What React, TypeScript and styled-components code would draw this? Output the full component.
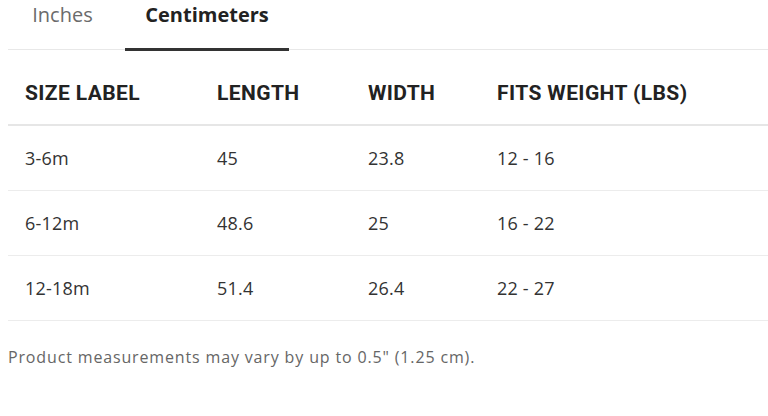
import styled, { createGlobalStyle } from 'styled-components'

const GlobalStyle = createGlobalStyle`
  body {
    margin: 0;
    background: #fff;
    font-family: 'Open Sans', 'Liberation Sans', sans-serif;
    overflow: hidden;
  }
`

const Page = styled.div`
  padding-left: 8px;
  width: 760px;
`

const TabList = styled.div`
  display: flex;
  align-items: stretch;
  gap: 8px;
  height: 50px;
  border-bottom: 1px solid #e8e8e8;
  box-sizing: border-box;
`

const Tab = styled.div<{ $active?: boolean; $width: number }>`
  display: flex;
  align-items: center;
  justify-content: center;
  width: ${(p) => p.$width}px;
  padding-bottom: 19px;
  box-sizing: border-box;
  font-size: 20px;
  font-weight: ${(p) => (p.$active ? 700 : 400)};
  color: ${(p) => (p.$active ? '#222' : '#6b6b6b')};
  border-bottom: 3px solid ${(p) => (p.$active ? '#333' : 'transparent')};
  margin-bottom: -2px;
`

const Table = styled.table`
  width: 760px;
  border-collapse: collapse;
  table-layout: fixed;
`

const HeadCell = styled.th<{ $width?: number }>`
  width: ${(p) => (p.$width ? `${p.$width}px` : 'auto')};
  height: 75px;
  padding: 12px 0 0 17px;
  text-align: left;
  font-family: 'Roboto', 'Liberation Sans', sans-serif;
  font-size: 21px;
  font-weight: 700;
  letter-spacing: 0.4px;
  color: #222;
  border-bottom: 2px solid #e6e6e6;
  box-sizing: border-box;
`

const Cell = styled.td`
  height: 65px;
  padding: 0 0 0 17px;
  font-size: 18px;
  letter-spacing: 0.2px;
  color: #333;
  border-bottom: 1px solid #ececec;
  box-sizing: border-box;
`

const Note = styled.p`
  margin: 26px 0 0;
  font-size: 16px;
  letter-spacing: 0.85px;
  line-height: 20px;
  color: #666;
`

const rows = [
  ['3-6m', '45', '23.8', '12 - 16'],
  ['6-12m', '48.6', '25', '16 - 22'],
  ['12-18m', '51.4', '26.4', '22 - 27'],
]

export default function App() {
  return (
    <Page>
      <GlobalStyle />
      <TabList>
        <Tab $width={109}>Inches</Tab>
        <Tab $width={164} $active>
          Centimeters
        </Tab>
      </TabList>
      <Table>
        <thead>
          <tr>
            <HeadCell $width={192}>SIZE LABEL</HeadCell>
            <HeadCell $width={151}>LENGTH</HeadCell>
            <HeadCell $width={129}>WIDTH</HeadCell>
            <HeadCell>FITS WEIGHT (LBS)</HeadCell>
          </tr>
        </thead>
        <tbody>
          {rows.map((r) => (
            <tr key={r[0]}>
              {r.map((c, i) => (
                <Cell key={i}>{c}</Cell>
              ))}
            </tr>
          ))}
        </tbody>
      </Table>
      <Note>Product measurements may vary by up to 0.5" (1.25 cm).</Note>
    </Page>
  )
}
